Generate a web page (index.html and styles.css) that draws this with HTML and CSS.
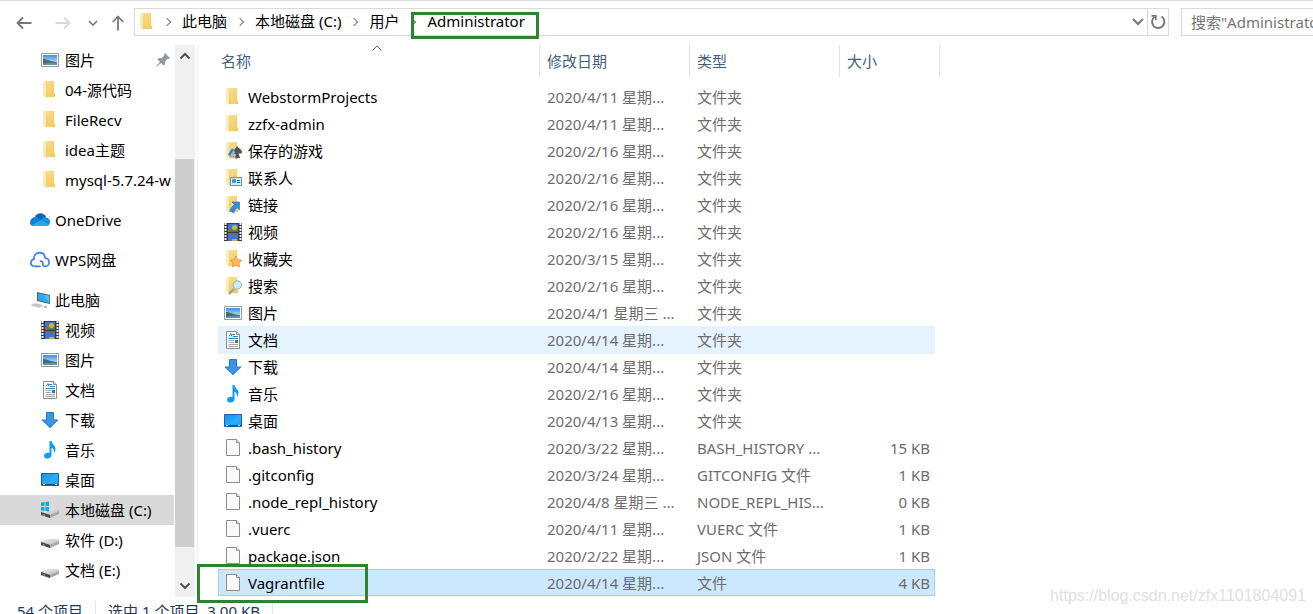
FILE: index.html
```html
<!DOCTYPE html>
<html lang="zh-CN">
<head>
<meta charset="utf-8">
<title>Administrator</title>
<link rel="stylesheet" href="styles.css">
</head>
<body>
<svg class="sprite" aria-hidden="true">
  <defs>
    <linearGradient id="gFold" x1="0" y1="0" x2="1" y2="1"><stop offset="0" stop-color="#fadf94"/><stop offset="1" stop-color="#f3ca58"/></linearGradient>
    <linearGradient id="gSky" x1="0" y1="0" x2="0" y2="1"><stop offset="0" stop-color="#3f8fe0"/><stop offset="1" stop-color="#e6f4fd"/></linearGradient>
    <linearGradient id="gDesk" x1="0" y1="0" x2="1" y2="1"><stop offset="0" stop-color="#0d93f5"/><stop offset=".5" stop-color="#27a8ff"/><stop offset="1" stop-color="#0a93f7"/></linearGradient>
    <linearGradient id="gDisk" x1="0" y1="0" x2="1" y2="1"><stop offset="0" stop-color="#f1f1f1"/><stop offset="1" stop-color="#b9b9b9"/></linearGradient>
  </defs>
  <symbol id="folder" viewBox="0 0 18 18">
    <path d="M4 0h9v12l1 1v3H4z" fill="url(#gFold)"/><path d="M2 0l4 2v13l-1 2-3-2z" fill="#fdeab6"/><path d="M5.500 2l.7.5v13l-1 1.200z" fill="#e9c255"/>
  </symbol>
  <symbol id="picture" viewBox="0 0 18 18">
    <path d="M.5 2.500h17v13H.5z" fill="#fff" stroke="#9a9a9a"/><path d="M2 4h14v10H2z" fill="url(#gSky)"/><path d="M2 8c4 0 6 2.500 14 3v3H2z" fill="#3f7168"/><path d="M2 12.500c5-1 9-1 14-.7V14H2z" fill="#5f93b5"/>
  </symbol>
  <symbol id="video" viewBox="0 0 18 18">
    <path d="M0 0h18v18H0z" fill="#3a3a3a"/><path d="M4 1h10v7.500H4zM4 10h10v8H4z" fill="#3c78d2"/>
    <path d="M1.500 0v18M16.500 0v18" stroke="#f4f4f4" stroke-width="2" stroke-dasharray="2 1"/>
    <circle cx="10.500" cy="4.500" r="2.500" fill="#d8b12f"/><path d="M7 7h7v1.500H7z" fill="#4b8b42"/><path d="M4 7h3v2H4z" fill="#c95043"/><path d="M8 10h5l-2 3z" fill="#c94534"/><path d="M8 16h5v2H8z" fill="#e0a92b"/>
  </symbol>
  <symbol id="doc" viewBox="0 0 18 18">
    <path d="M2.500.5h10l3 3v14h-13z" fill="#fff" stroke="#8b8b8b"/><path d="M12.500.5v3h3" fill="#ddd" stroke="#8b8b8b"/>
    <path d="M5 5.500l2-3 1 3M8 3.500h3M9 5.500h5M4.500 7.500H14" fill="none" stroke="#2b82c9"/><path d="M4.500 9.500H10M4.500 11.500H10M4.500 13.500H14M4.500 15.500H14" stroke="#a5a5a5"/><path d="M11 9h3v3h-3z" fill="#41729c"/>
  </symbol>
  <symbol id="down" viewBox="0 0 18 18"><path d="M5.500 1.500h7V9h4.300L9 16.700 1.200 9h4.300z" fill="#3b95e4" stroke="#2378c4"/></symbol>
  <symbol id="music" viewBox="0 0 18 18"><path d="M8.500 0h2c.2 3 4 4.200 4 8 0 1.800-.8 3-1.500 4 .2-3-.8-4.600-2.500-5.300V14c0 2-1.500 3.500-4 3.500-2 0-3.500-1-3.500-2.600C3 12.700 5.800 11.400 8.500 12z" fill="#0e9cf6"/></symbol>
  <symbol id="desktop" viewBox="0 0 18 18"><path d="M.5 2.500h17v12H.5z" fill="url(#gDesk)" stroke="#1466a8"/><path d="M1 13.500h16" stroke="#08508c"/><path d="M2 13.500h2M14 13.500h2" stroke="#cfe8fa"/><path d="M6 13L15 3h2v10z" fill="#49b8ff" opacity=".35"/></symbol>
  <symbol id="disk" viewBox="0 0 18 18"><path d="M0 11l8-3h9l1 2v3l-9 4-9-3z" fill="#a8a8a8"/><path d="M0 11l8-3h9l1 2-9 4z" fill="url(#gDisk)"/><path d="M0 11l9 3v3l-9-3z" fill="#484848"/><path d="M2 13l2 .7v1.200l-2-.7z" fill="#57c565"/></symbol>
  <symbol id="sysdisk" viewBox="0 0 18 18"><use href="#disk"/><path d="M0 1.500L3.500 1v4H0zM4.500 .9L8 .4V5H4.500zM0 6h3.500v4L0 9.500zM4.500 6H8v4.500l-3.500-.4z" fill="#00adef"/></symbol>
  <symbol id="file" viewBox="0 0 18 18"><path d="M2.500.5h10l3 3v13h-13z" fill="#fafafa" stroke="#8d8d8d"/><path d="M12.500.5v3h3" fill="#e9e9e9" stroke="#8d8d8d"/></symbol>
  <symbol id="games" viewBox="0 0 18 18"><use href="#folder"/><path d="M13 4c1 2 5 3.500 5 6 0 1.800-2 2-3.500 1.200L16 16h-5l1-4c-2 .6-3.500 0-3-2 .5-2 3-4 4-6z" fill="#4d555b"/><path d="M4 13l4-7 3 4-3 7z" fill="#96b9d0"/><path d="M5 13l4-6" stroke="#2375bb" stroke-width="2"/><path d="M9 14l4 3" stroke="#c16c4d"/></symbol>
  <symbol id="contacts" viewBox="0 0 18 18"><use href="#folder"/><path d="M6.500 8.500h11v8h-11z" fill="#d9f0fb" stroke="#6593ad"/><path d="M8 10h4v4H8z" fill="#4a9aca"/><path d="M13 11.500h3M13 13.500h3" stroke="#376987"/></symbol>
  <symbol id="links" viewBox="0 0 18 18"><use href="#folder"/><path d="M8 6h7.500v8l-2.500-2.500c-1.500 1.500-2.500 3-3 5.500l-4-2c.8-3 2.200-4.500 4.500-6.500z" fill="#2c8fdf" stroke="#1e70b8" stroke-width=".6"/></symbol>
  <symbol id="fav" viewBox="0 0 18 18"><use href="#folder"/><path d="M12 6l1.800 3.700 4 .5-2.900 2.800.8 4-3.700-1.900L8.300 17l.8-4-2.900-2.800 4-.5z" fill="#fbb95c" stroke="#e58b27" stroke-width=".7"/></symbol>
  <symbol id="find" viewBox="0 0 18 18"><use href="#folder"/><path d="M10 12l-5 5" stroke="#9b9b9b" stroke-width="2"/><circle cx="13.300" cy="8" r="4.200" fill="#cdeafb" stroke="#8fb1c4"/></symbol>
  <symbol id="onedrive" viewBox="0 0 20 18"><path d="M5 6c2-5 9-5 11 0l-5 4z" fill="#0a64b8"/><path d="M0 12c0-4 3-6.500 6.500-5.500L15 11l-9 4H4c-2.500 0-4-1-4-3z" fill="#147fd3"/><path d="M11 9c2-4 5-3 5.500-2.500C19 7 20 9 20 11c0 3-2 4-4 4H9z" fill="#1490df"/><path d="M2 14l9-5 8 4.500c-1 1.200-2 1.500-3 1.500H4c-1 0-1.500-.3-2-1z" fill="#28a8ea"/></symbol>
  <symbol id="wps" viewBox="0 0 20 18"><path d="M10 15.300H4.500C2.500 15.300.9 14 .9 11.800c0-2 1.300-3.300 3.100-3.600C3.500 4.500 6 1.700 9.500 1.700c3 0 5.300 2.200 5.600 5.300 2.300.2 4 1.900 4 4.200s-1.800 4.100-4.100 4.100c-2 0-2.500-2-2.200-3.300.2-1.200-.8-2-2.300-1.900" fill="none" stroke="#417ff0" stroke-width="1.700" stroke-linecap="round"/></symbol>
  <symbol id="pc" viewBox="0 0 20 18"><path d="M7 1l13 3v9L7 10z" fill="#4e606b"/><path d="M8 2.200l11.200 2.600v7L8 9.200z" fill="#2aaaf8"/><path d="M14 3.700l5.200 1.200v7z" fill="#55c2ff"/><path d="M0 14l5-2 9 2-4 3z" fill="#d3d8db"/><path d="M2 14l8 2M4 13l8 2" stroke="#aaa" stroke-width=".6"/><path d="M14 16h3" stroke="#bbb" stroke-width="2"/></symbol>
</svg>

<div class="window">
  <header class="toolbar">
    <nav class="history" aria-label="导航">
      <button class="nav-btn" aria-label="后退"><svg width="16" height="14" viewBox="0 0 16 14"><path d="M15.500 7H1.500M7 1.500L1.500 7 7 12.500" fill="none" stroke="#777" stroke-width="1.800"/></svg></button>
      <button class="nav-btn" aria-label="前进" disabled><svg width="16" height="14" viewBox="0 0 16 14"><path d="M.5 7h14M9 1.500L14.500 7 9 12.500" fill="none" stroke="#d9d9d9" stroke-width="1.800"/></svg></button>
      <button class="nav-btn small" aria-label="最近"><svg width="10" height="8" viewBox="0 0 10 8"><path d="M1 2l4 4 4-4" fill="none" stroke="#777" stroke-width="1.600"/></svg></button>
      <button class="nav-btn" aria-label="上移"><svg width="12" height="16" viewBox="0 0 12 16"><path d="M6 15.500V1.500M.8 7L6 1.500 11.200 7" fill="none" stroke="#777" stroke-width="1.800"/></svg></button>
    </nav>
    <div class="address">
      <svg class="icon"><use href="#folder"/></svg>
      <span class="chev"></span><button class="crumb">此电脑</button>
      <span class="chev"></span><button class="crumb">本地磁盘 (C:)</button>
      <span class="chev"></span><button class="crumb">用户</button>
      <span class="chev"></span><button class="crumb">Administrator</button>
      <button class="addr-btn drop" aria-label="历史地址"><svg width="12" height="8" viewBox="0 0 12 8"><path d="M1 1l5 5 5-5" fill="none" stroke="#777" stroke-width="2"/></svg></button>
      <button class="addr-btn refresh" aria-label="刷新"><svg width="16" height="16" viewBox="0 0 16 16"><path d="M11.500 2.500A6.200 6.200 0 1 1 4.500 2.800" fill="none" stroke="#777" stroke-width="1.900"/><path d="M1.500 1.800h4.300v4.400" fill="none" stroke="#777" stroke-width="1.700"/></svg></button>
    </div>
    <input class="search" type="text" aria-label="搜索" placeholder='搜索"Administrator"'>
  </header>

  <main class="panes">
    <aside class="tree">
      <a class="node"><svg class="icon"><use href="#picture"/></svg>图片<svg class="pin" viewBox="0 0 14 14"><path d="M9 0l5 5-1.500 1-1-.3-2.600 3 .2 2.600L7.500 12.500 5 10 .8 13.700.3 13.200 4 9 1.500 6.500 2.800 5l2.700.2 2.900-2.600L8 1.200z" fill="#8d9aa5"/></svg></a>
      <a class="node"><svg class="icon"><use href="#folder"/></svg>04-源代码</a>
      <a class="node"><svg class="icon"><use href="#folder"/></svg>FileRecv</a>
      <a class="node"><svg class="icon"><use href="#folder"/></svg>idea主题</a>
      <a class="node"><svg class="icon"><use href="#folder"/></svg>mysql-5.7.24-w</a>
      <a class="node root"><svg class="icon wide"><use href="#onedrive"/></svg>OneDrive</a>
      <a class="node root"><svg class="icon wide"><use href="#wps"/></svg>WPS网盘</a>
      <a class="node root"><svg class="icon wide"><use href="#pc"/></svg>此电脑</a>
      <a class="node"><svg class="icon"><use href="#video"/></svg>视频</a>
      <a class="node"><svg class="icon"><use href="#picture"/></svg>图片</a>
      <a class="node"><svg class="icon"><use href="#doc"/></svg>文档</a>
      <a class="node"><svg class="icon"><use href="#down"/></svg>下载</a>
      <a class="node"><svg class="icon"><use href="#music"/></svg>音乐</a>
      <a class="node"><svg class="icon"><use href="#desktop"/></svg>桌面</a>
      <a class="node active"><svg class="icon"><use href="#sysdisk"/></svg>本地磁盘 (C:)</a>
      <a class="node"><svg class="icon"><use href="#disk"/></svg>软件 (D:)</a>
      <a class="node"><svg class="icon"><use href="#disk"/></svg>文档 (E:)</a>
    </aside>
    <div class="scrollbar">
      <svg width="12" height="8" viewBox="0 0 12 8"><path d="M1.500 6.500L6 2l4.500 4.500" fill="none" stroke="#505050" stroke-width="2"/></svg>
      <div class="track"><div class="thumb"></div></div>
      <svg width="12" height="8" viewBox="0 0 12 8"><path d="M1.500 1.500L6 6l4.500-4.500" fill="none" stroke="#505050" stroke-width="2"/></svg>
    </div>

    <section class="files">
      <div class="columns">
        <button class="col name">名称<svg class="sort" width="10" height="6" viewBox="0 0 10 6"><path d="M.5 5.500L5 1l4.500 4.500" fill="none" stroke="#666"/></svg></button>
        <button class="col">修改日期</button>
        <button class="col">类型</button>
        <button class="col size">大小</button>
      </div>
      <div class="viewport">
        <table class="list">
          <colgroup><col class="c-name"><col class="c-mid"><col class="c-mid"><col class="c-size"></colgroup>
          <tbody>
            <tr><td><svg class="icon"><use href="#folder"/></svg></td><td></td><td></td><td></td></tr>
            <tr><td><svg class="icon"><use href="#folder"/></svg>WebstormProjects</td><td>2020/4/11 星期...</td><td>文件夹</td><td></td></tr>
            <tr><td><svg class="icon"><use href="#folder"/></svg>zzfx-admin</td><td>2020/4/11 星期...</td><td>文件夹</td><td></td></tr>
            <tr><td><svg class="icon"><use href="#games"/></svg>保存的游戏</td><td>2020/2/16 星期...</td><td>文件夹</td><td></td></tr>
            <tr><td><svg class="icon"><use href="#contacts"/></svg>联系人</td><td>2020/2/16 星期...</td><td>文件夹</td><td></td></tr>
            <tr><td><svg class="icon"><use href="#links"/></svg>链接</td><td>2020/2/16 星期...</td><td>文件夹</td><td></td></tr>
            <tr><td><svg class="icon"><use href="#video"/></svg>视频</td><td>2020/2/16 星期...</td><td>文件夹</td><td></td></tr>
            <tr><td><svg class="icon"><use href="#fav"/></svg>收藏夹</td><td>2020/3/15 星期...</td><td>文件夹</td><td></td></tr>
            <tr><td><svg class="icon"><use href="#find"/></svg>搜索</td><td>2020/2/16 星期...</td><td>文件夹</td><td></td></tr>
            <tr><td><svg class="icon"><use href="#picture"/></svg>图片</td><td>2020/4/1 星期三 ...</td><td>文件夹</td><td></td></tr>
            <tr class="hover"><td><svg class="icon"><use href="#doc"/></svg>文档</td><td>2020/4/14 星期...</td><td>文件夹</td><td></td></tr>
            <tr><td><svg class="icon"><use href="#down"/></svg>下载</td><td>2020/4/14 星期...</td><td>文件夹</td><td></td></tr>
            <tr><td><svg class="icon"><use href="#music"/></svg>音乐</td><td>2020/2/16 星期...</td><td>文件夹</td><td></td></tr>
            <tr><td><svg class="icon"><use href="#desktop"/></svg>桌面</td><td>2020/4/13 星期...</td><td>文件夹</td><td></td></tr>
            <tr><td><svg class="icon"><use href="#file"/></svg>.bash_history</td><td>2020/3/22 星期...</td><td>BASH_HISTORY ...</td><td>15 KB</td></tr>
            <tr><td><svg class="icon"><use href="#file"/></svg>.gitconfig</td><td>2020/3/24 星期...</td><td>GITCONFIG 文件</td><td>1 KB</td></tr>
            <tr><td><svg class="icon"><use href="#file"/></svg>.node_repl_history</td><td>2020/4/8 星期三 ...</td><td>NODE_REPL_HIS...</td><td>0 KB</td></tr>
            <tr><td><svg class="icon"><use href="#file"/></svg>.vuerc</td><td>2020/4/11 星期...</td><td>VUERC 文件</td><td>1 KB</td></tr>
            <tr><td><svg class="icon"><use href="#file"/></svg>package.json</td><td>2020/2/22 星期...</td><td>JSON 文件</td><td>1 KB</td></tr>
            <tr class="selected"><td><svg class="icon"><use href="#file"/></svg>Vagrantfile</td><td>2020/4/14 星期...</td><td>文件</td><td>4 KB</td></tr>
          </tbody>
        </table>
      </div>
      <div class="mark file-mark"></div>
    </section>
  </main>

  <footer class="status"><span>54 个项目</span><span>选中 1 个项目&nbsp; 3.00 KB</span></footer>
  <div class="mark path-mark"></div>
  <div class="watermark">https://blog.csdn.net/zfx1101804091</div>
</div>
</body>
</html>
```

FILE: styles.css
```css
* { box-sizing: border-box; }
body {
  margin: 0;
  overflow: hidden;
  background: #fff;
  color: #000;
  font: 15px/20px "Noto Sans", "Noto Sans CJK SC", sans-serif;
}
button, input {
  margin: 0;
  padding: 0;
  border: 0;
  background: none;
  color: inherit;
  font: inherit;
}
.sprite { position: absolute; width: 0; height: 0; }
.icon { flex: none; width: 18px; height: 18px; }
.icon.wide { width: 20px; }

.window {
  position: relative;
  display: flex;
  flex-direction: column;
  height: 100vh;
  overflow: hidden;
  border-top: 1px solid #d9d9d9;
}

.toolbar {
  display: flex;
  flex: none;
  height: 44px;
  padding: 7px 0 8px 16px;
}
.history { display: flex; align-items: center; width: 118px; }
.nav-btn { display: flex; align-items: center; justify-content: flex-start; width: 39px; height: 28px; }
.nav-btn.small { width: 18px; }
.nav-btn:nth-child(2) { width: 33px; }
.nav-btn:nth-child(3) { width: 24px; }
.nav-btn:nth-child(4) { width: 12px; }
.address {
  display: flex;
  flex: 1;
  align-items: center;
  min-width: 0;
  height: 28px;
  padding-left: 3px;
  border: 1px solid #d9d9d9;
}
.chev {
  flex: none;
  width: 6px;
  height: 6px;
  margin: 0 12px 0 8px;
  border: solid #777;
  border-width: 1px 1px 0 0;
  transform: rotate(45deg);
}
.crumb { flex: none; padding: 0 2px 2px 0; white-space: nowrap; }
.addr-btn { display: flex; align-items: center; justify-content: center; width: 21px; height: 26px; }
.drop { width: 19px; margin-left: auto; }
.refresh { border-left: 1px solid #d9d9d9; }
.search {
  flex: none;
  width: 132px;
  height: 28px;
  margin-left: 12px;
  padding-left: 9px;
  border: 1px solid #d9d9d9;
  border-right: 0;
}
.search::placeholder { color: #757575; opacity: 1; }

.panes { display: flex; flex: none; height: 552px; }
.tree { flex: none; width: 174px; overflow: hidden; }
.node {
  position: relative;
  display: flex;
  align-items: center;
  gap: 6px;
  height: 30px;
  padding-left: 41px;
  white-space: nowrap;
}
.node.root { gap: 5px; margin-top: 10px; padding-left: 30px; }
.node.active { background: #d9d9d9; }
.pin { width: 14px; height: 14px; margin: 0 4px 0 auto; }
.scrollbar {
  display: flex;
  flex: none;
  flex-direction: column;
  align-items: center;
  width: 20px;
  margin-left: 1px;
  padding: 7px 0;
  background: #f0f0f0;
}
.track { flex: 1; width: 100%; padding-top: 99px; }
.thumb { width: 19px; height: 388px; background: #cdcdcd; }

.files {
  position: relative;
  flex: 1;
  min-width: 0;
  margin-left: 2px;
  padding-left: 20px;
  border-left: 1px solid #f0f0f0;
}
.columns { display: flex; height: 32px; }
.col {
  position: relative;
  width: 150px;
  padding-left: 7px;
  border-right: 1px solid #e2e2e2;
  color: #44617f;
  text-align: left;
}
.col.name { width: 322px; padding-left: 3px; }
.col.size { width: 100px; }
.sort { position: absolute; top: 0; left: 50%; margin-left: -7px; }

/* The list is scrolled so that its first row is almost out of view. */
.viewport { height: 520px; overflow: hidden; }
.list { width: 717px; margin-top: -21px; border-collapse: collapse; table-layout: fixed; }
.c-name { width: 322px; }
.c-mid { width: 150px; }
.c-size { width: 95px; }
.list td { height: 27px; padding: 0 0 0 7px; color: #6d6d6d; white-space: nowrap; }
.list td:first-child { display: flex; align-items: center; gap: 6px; padding-left: 6px; color: #000; }
.list td:last-child { padding: 0 5px 0 0; text-align: right; }
.hover { background: #e5f3ff; box-shadow: 0 1px 0 #e5f3ff; }
.selected { background: #cce8ff; outline: 1px solid #99d1ff; outline-offset: -1px; }

.status {
  display: flex;
  flex: none;
  padding: 4px 0 0 17px;
  color: #1e395b;
}
.status span { margin-right: 12px; padding-right: 12px; border-right: 1px solid #e6e6e6; }

.mark { position: absolute; border: 3px solid #2f8230; pointer-events: none; }
.path-mark { top: 11px; left: 411px; width: 128px; height: 27px; }
.file-mark { bottom: -6px; left: -1px; width: 171px; height: 39px; }
.watermark {
  position: absolute;
  right: 7px;
  bottom: 8px;
  color: #e0e0e0;
  font: 16px/20px "Liberation Sans", Arial, sans-serif;
}
```
